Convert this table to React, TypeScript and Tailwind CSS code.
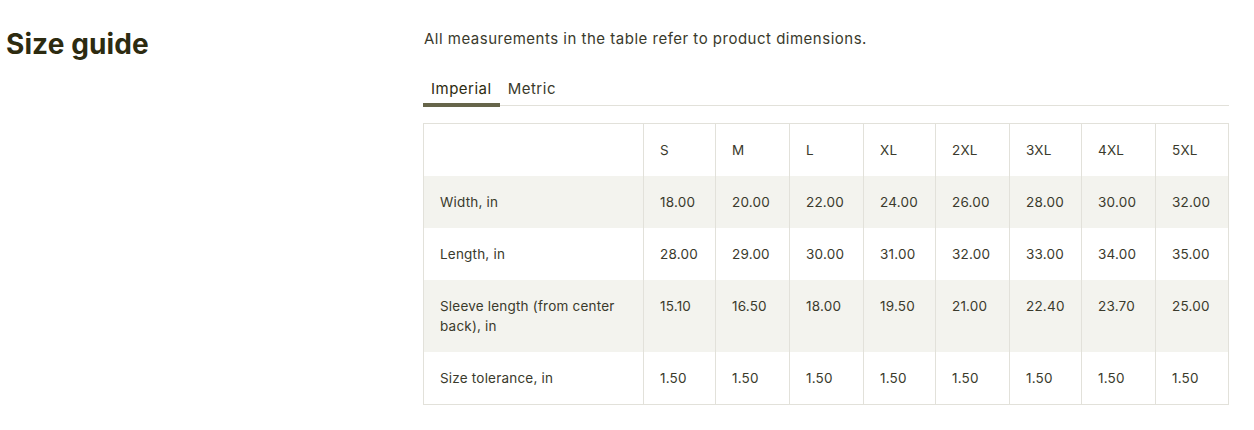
import { useState } from "react";

type Unit = "imperial" | "metric";

const SIZES = ["S", "M", "L", "XL", "2XL", "3XL", "4XL", "5XL"];
const COL_WIDTHS = ["w-[220px]", "w-[72px]", "w-[74px]", "w-[74px]", "w-[72px]", "w-[74px]", "w-[72px]", "w-[74px]", "w-[73px]"];

const ROWS: Record<Unit, { label: string; values: string[] }[]> = {
  imperial: [
    { label: "Width, in", values: ["18.00", "20.00", "22.00", "24.00", "26.00", "28.00", "30.00", "32.00"] },
    { label: "Length, in", values: ["28.00", "29.00", "30.00", "31.00", "32.00", "33.00", "34.00", "35.00"] },
    { label: "Sleeve length (from center back), in", values: ["15.10", "16.50", "18.00", "19.50", "21.00", "22.40", "23.70", "25.00"] },
    { label: "Size tolerance, in", values: ["1.50", "1.50", "1.50", "1.50", "1.50", "1.50", "1.50", "1.50"] },
  ],
  metric: [
    { label: "Width, cm", values: ["45.7", "50.8", "55.9", "61.0", "66.0", "71.1", "76.2", "81.3"] },
    { label: "Length, cm", values: ["71.1", "73.7", "76.2", "78.7", "81.3", "83.8", "86.4", "88.9"] },
    { label: "Sleeve length (from center back), cm", values: ["38.4", "41.9", "45.7", "49.5", "53.3", "56.9", "60.2", "63.5"] },
    { label: "Size tolerance, cm", values: ["3.8", "3.8", "3.8", "3.8", "3.8", "3.8", "3.8", "3.8"] },
  ],
};

export default function App() {
  const [unit, setUnit] = useState<Unit>("imperial");
  const tabs: { key: Unit; label: string }[] = [
    { key: "imperial", label: "Imperial" },
    { key: "metric", label: "Metric" },
  ];

  return (
    <div className="min-h-[430px] bg-white flex font-['Inter',sans-serif] text-[#3a3a2c]">
      <div className="w-[423px] pl-[6px] pt-[27px] shrink-0">
        <h2 className="text-[28px] leading-[34px] font-bold tracking-[0.1px] text-[#2d2b10]">Size guide</h2>
      </div>

      <div className="flex-1 pr-[26px] pt-[28px]">
        <p className="pl-px text-[15px] leading-[22px] tracking-[0.5px]">All measurements in the table refer to product dimensions.</p>

        <div className="mt-[24px] h-[32px] flex border-b border-[#e2e1da]">
          {tabs.map((tab) => (
            <button
              key={tab.key}
              onClick={() => setUnit(tab.key)}
              className={`h-[33px] px-2 text-[15px] leading-[22px] tracking-[0.5px] self-start border-b-4 ${
                unit === tab.key ? "border-[#66654a] text-[#2d2b10]" : "border-transparent"
              }`}
            >
              {tab.label}
            </button>
          ))}
        </div>

        <table className="mt-[17px] w-[805px] table-fixed border-collapse border border-[#e2e1da] text-[13.5px] leading-[20px] tracking-[0.2px]">
          <colgroup>
            {COL_WIDTHS.map((w, i) => (
              <col key={i} className={w} />
            ))}
          </colgroup>
          <thead>
            <tr className="bg-white">
              <th className="border-r border-[#e2e1da] px-4 py-4 font-normal text-left"></th>
              {SIZES.map((s) => (
                <th key={s} className="border-r border-[#e2e1da] px-4 py-4 font-normal text-left">{s}</th>
              ))}
            </tr>
          </thead>
          <tbody>
            {ROWS[unit].map((row, i) => (
              <tr key={row.label} className={i % 2 === 0 ? "bg-[#f3f3ee]" : "bg-white"}>
                <td className="border-r border-[#e2e1da] px-4 py-4 align-top">{row.label}</td>
                {row.values.map((v, j) => (
                  <td key={j} className="border-r border-[#e2e1da] px-4 py-4 align-top">{v}</td>
                ))}
              </tr>
            ))}
          </tbody>
        </table>
      </div>
    </div>
  );
}
